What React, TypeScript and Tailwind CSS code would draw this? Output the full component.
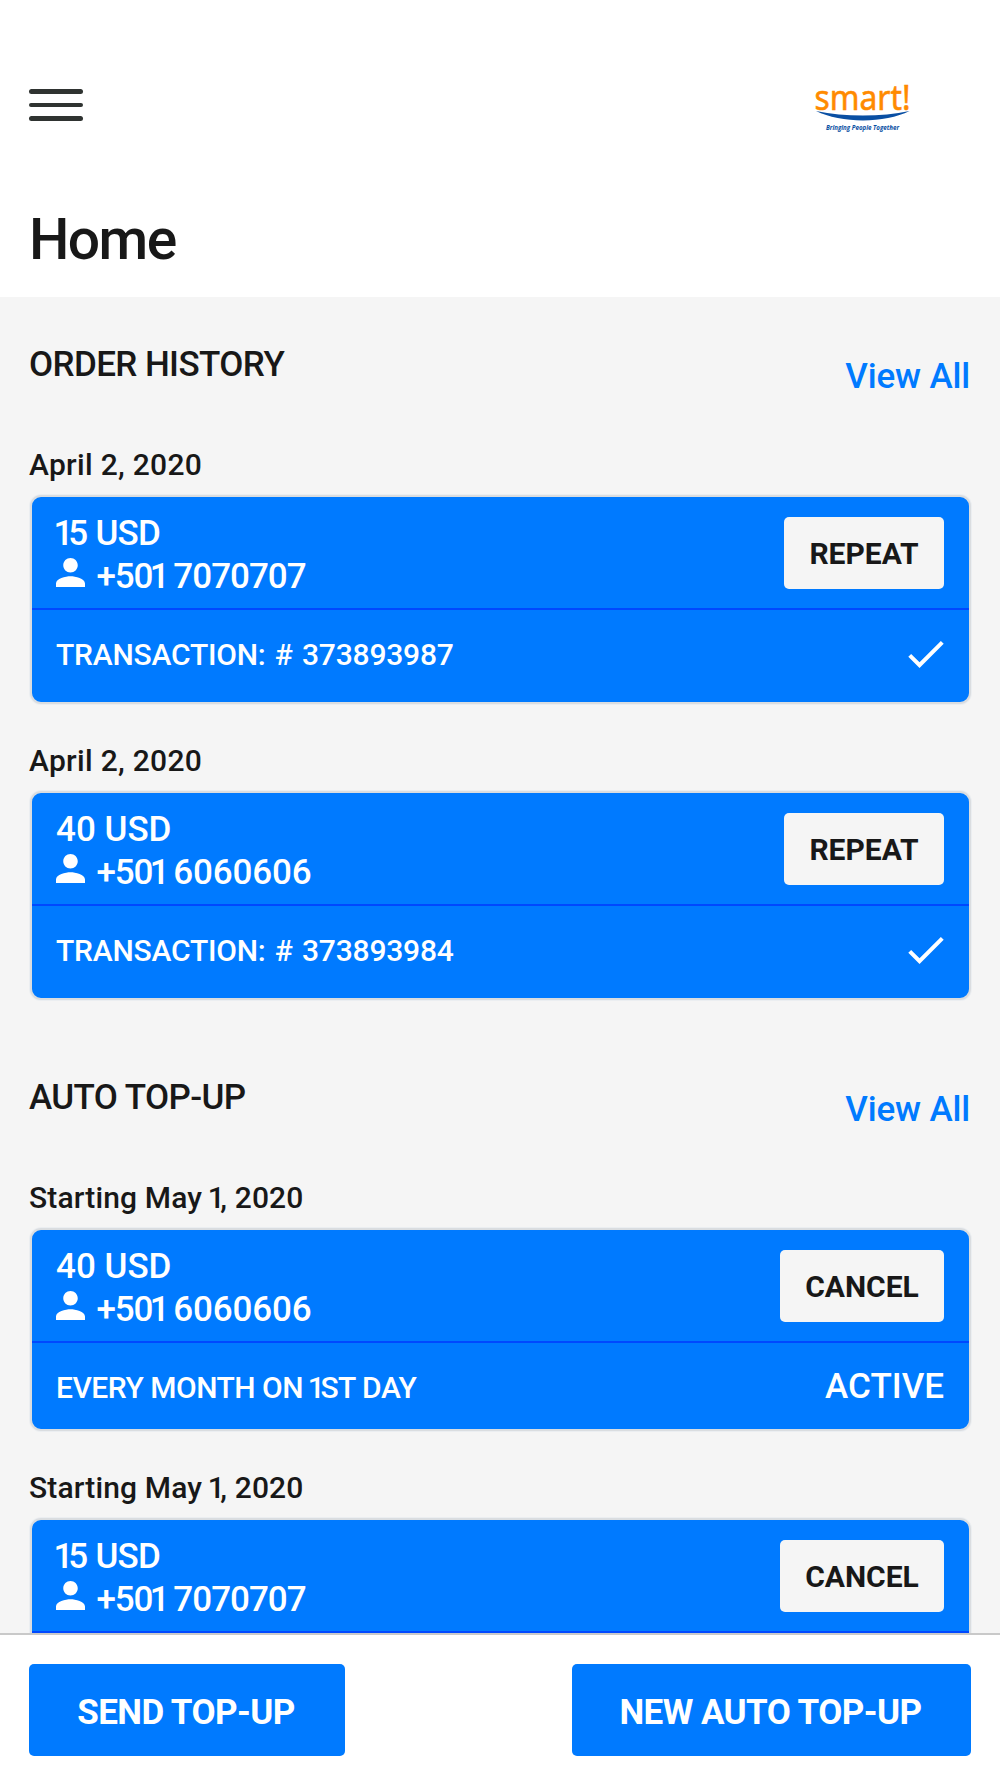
import { Fragment } from 'react';
import { clsx } from 'clsx';

type Order = {
  date: string;
  amount: string;
  prefix: string;
  number: string;
  action: string;
  detail: string;
  status?: string;
};

const ORDERS: Order[] = [
  {
    date: 'April 2, 2020',
    amount: '15 USD',
    prefix: '+501',
    number: '7070707',
    action: 'REPEAT',
    detail: 'TRANSACTION: # 373893987',
  },
  {
    date: 'April 2, 2020',
    amount: '40 USD',
    prefix: '+501',
    number: '6060606',
    action: 'REPEAT',
    detail: 'TRANSACTION: # 373893984',
  },
];

const TOP_UPS: Order[] = [
  {
    date: 'Starting May 1, 2020',
    amount: '40 USD',
    prefix: '+501',
    number: '6060606',
    action: 'CANCEL',
    detail: 'EVERY MONTH ON 1ST DAY',
    status: 'ACTIVE',
  },
  {
    date: 'Starting May 1, 2020',
    amount: '15 USD',
    prefix: '+501',
    number: '7070707',
    action: 'CANCEL',
    detail: 'EVERY MONTH ON 1ST DAY',
    status: 'ACTIVE',
  },
];

// Roboto's "1" is as wide as its other digits, so tighten it up
function Figures({ text }: { text: string }) {
  return (
    <>
      {text.split('1').map((part, i) => (
        <Fragment key={i}>
          {i > 0 && <span className="-ml-[0.07em] tracking-[-0.15em]">1</span>}
          {part}
        </Fragment>
      ))}
    </>
  );
}

function Logo() {
  return (
    <svg viewBox="0 0 100 56" className="h-14 w-[100px] overflow-visible" role="img" aria-label="smart!">
      <text
        x="1.500"
        y="29.500"
        fontSize="35"
        textLength="96"
        lengthAdjust="spacingAndGlyphs"
        fill="#ff8a00"
        stroke="#ff8a00"
        strokeWidth="0.600"
        className="font-['Noto_Sans']"
      >
        smart!
      </text>
      <path d="M3 31C32 37 68 37 96.500 31C72 43.500 28 43.500 3 31Z" fill="#0a4fa3" />
      <text
        x="13"
        y="50"
        fontSize="6.800"
        textLength="73"
        lengthAdjust="spacingAndGlyphs"
        fill="#0a4fa3"
        className="font-['Open_Sans'] font-bold italic"
      >
        Bringing People Together
      </text>
    </svg>
  );
}

function PersonIcon() {
  return (
    <svg viewBox="4 4 16 16" className="mt-[3px] -ml-[0.5px] h-[29px] w-[29px] fill-white">
      <path d="M12 12c2.210 0 4-1.790 4-4s-1.790-4-4-4-4 1.790-4 4 1.790 4 4 4zm0 2c-2.670 0-8 1.340-8 4v2h16v-2c0-2.660-5.330-4-8-4z" />
    </svg>
  );
}

function CheckIcon() {
  return (
    <svg viewBox="3.410 5.590 17.590 13.410" className="mb-[3px] h-[27px] w-9 fill-white">
      <path d="M9 16.170 4.830 12l-1.420 1.410L9 19 21 7l-1.410-1.410z" />
    </svg>
  );
}

function OrderCard({ order }: { order: Order }) {
  return (
    <article>
      <h3
        className={clsx(
          'mb-3 -ml-px h-[35px] text-[30px] leading-[34px] font-medium',
          order.status ? 'tracking-[0.15px]' : 'tracking-[0.3px]',
        )}
      >
        <Figures text={order.date} />
      </h3>
      <div className="overflow-hidden rounded-[11px] border-2 border-[#dadde0] bg-[#007aff] text-white shadow-[0_0_0_1px_#ebeef1]">
        <div className="flex h-[113px] justify-between border-b-2 border-[#0048ff] pr-[25px] pl-6">
          <div className="pt-3.5 text-[35px] font-medium">
            <p className={clsx('h-11 leading-[46px]', order.amount.startsWith('1') && 'tracking-[-0.7px]')}>
              <Figures text={order.amount} />
            </p>
            <p className="flex h-11 gap-3 leading-[44px]">
              <PersonIcon />
              <span className="tracking-[-1.2px] [word-spacing:1.5px]">
                <Figures text={order.prefix} />{' '}
                <span className={order.number.startsWith('7') ? 'tracking-[-1px]' : 'tracking-[-0.15px]'}>
                  {order.number}
                </span>
              </span>
            </p>
          </div>
          <button
            className={clsx(
              'mt-5 flex h-[72px] items-center justify-center rounded-[5px] bg-[#f5f5f5] pt-px text-[30px] font-bold text-[#181818]',
              order.action === 'REPEAT' ? 'w-40' : 'w-[164px]',
            )}
          >
            {order.action}
          </button>
        </div>
        <div className={clsx('flex items-center justify-between pr-[25px] pl-6', order.status ? 'h-[86px]' : 'h-[92px]')}>
          <span
            className={clsx(
              'text-[30px] font-medium',
              order.status ? 'pt-0.5 tracking-[-0.5px]' : 'pb-[3px] tracking-[-0.2px] [word-spacing:2px]',
            )}
          >
            <Figures text={order.detail} />
          </span>
          {order.status ? <span className="pt-[3px] text-[35px] font-medium">{order.status}</span> : <CheckIcon />}
        </div>
      </div>
    </article>
  );
}

function Section({ title, orders }: { title: string; orders: Order[] }) {
  return (
    <section>
      <div className="mb-[50px] flex items-start justify-between text-[35px] leading-[42px] font-medium">
        <h2 className="mt-px -ml-px tracking-[-0.6px]">{title}</h2>
        <a href="#all" className="mt-[13px] mr-px tracking-[-0.15px] text-[#007aff]">
          View All
        </a>
      </div>
      <div className="flex flex-col gap-10">
        {orders.map((order, i) => (
          <OrderCard key={i} order={order} />
        ))}
      </div>
    </section>
  );
}

export default function App() {
  return (
    <div className="flex h-[1778px] w-[1000px] flex-col overflow-hidden bg-white font-[Roboto,sans-serif] text-[#181818]">
      <header className="h-[297px] shrink-0">
        <div className="flex items-start justify-between pt-20 pr-[87px] pl-[29px]">
          <button aria-label="Menu" className="mt-[9px] flex w-[54px] flex-col gap-[9px]">
            <span className="h-[4.600px] rounded-full bg-[#2f3331]" />
            <span className="h-[4.600px] rounded-full bg-[#2f3331]" />
            <span className="h-[4.600px] rounded-full bg-[#2f3331]" />
          </button>
          <Logo />
        </div>
        <h1 className="mt-[70px] ml-[29px] text-[57px] leading-[68px] font-medium tracking-[-1.6px]">Home</h1>
      </header>

      <main className="flex min-h-0 flex-1 flex-col gap-[76px] overflow-hidden bg-[#f5f5f5] pt-[46px] pr-[29px] pl-[30px]">
        <Section title="ORDER HISTORY" orders={ORDERS} />
        <Section title="AUTO TOP-UP" orders={TOP_UPS} />
      </main>

      <footer className="flex h-[145px] shrink-0 items-start justify-between border-t-2 border-[#c9c9c9] pt-[29px] pr-[29px] pl-[29px] text-[35px] font-bold tracking-[-0.55px] text-white">
        <button className="h-[92px] w-[316px] rounded-[5px] bg-[#007aff] pt-[7px] pr-0.5">SEND TOP-UP</button>
        <button className="h-[92px] w-[399px] rounded-[5px] bg-[#007aff] pt-[7px] pr-0.5">NEW AUTO TOP-UP</button>
      </footer>
    </div>
  );
}
